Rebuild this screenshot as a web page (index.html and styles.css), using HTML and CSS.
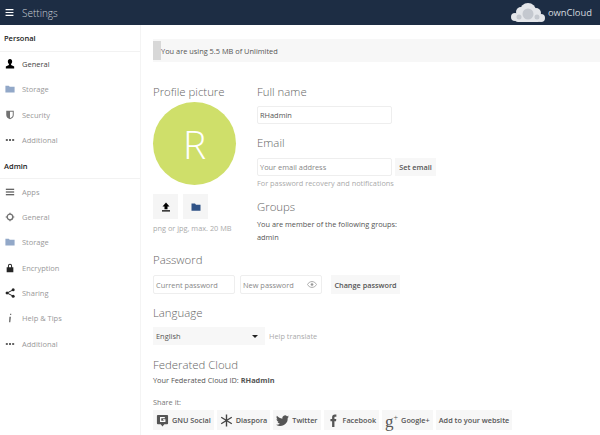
FILE: index.html
```html
<!DOCTYPE html>
<html lang="en">
<head>
<meta charset="utf-8">
<title>Settings</title>
<link rel="stylesheet" href="styles.css">
</head>
<body>
<header class="topbar">
  <div class="brand-left">
    <svg class="menu-icon" viewBox="0 0 9 8"><path d="M0 0h9v1.400H0zM0 3.300h9v1.400H0zM0 6.600h9V8H0z" fill="#fff"/></svg>
    <span class="page-title">Settings</span>
  </div>
  <div class="brand-right">
    <svg class="logo" viewBox="0 0 36 20">
      <g fill="#e4e6ea"><circle cx="5" cy="14" r="4"/><circle cx="11" cy="9" r="5"/><circle cx="18" cy="8" r="8"/><circle cx="26" cy="10" r="5"/><circle cx="31" cy="15" r="4"/><rect x="5" y="12" width="26" height="7" rx="3"/></g>
      <g fill="#c4c8cf"><circle cx="18" cy="11" r="5.500"/><circle cx="9" cy="14" r="2.500"/><circle cx="27" cy="14" r="2.500"/></g>
    </svg>
    <span class="logo-text">ownCloud</span>
  </div>
</header>
<div class="shell">
  <nav class="sidebar">
    <h2 class="nav-head">Personal</h2>
    <a class="nav-item active"><svg class="ico" viewBox="0 0 12 12"><path d="M6 0C4.400 0 3.400 1.200 3.400 3c0 1.300.6 2.500 1.300 3.100v1L1 9v2.500h10V9L7.300 7.100v-1C8 5.500 8.600 4.300 8.600 3 8.600 1.200 7.600 0 6 0z" fill="#000"/></svg><span>General</span></a>
    <a class="nav-item"><svg class="ico faded" viewBox="0 0 12 12"><path d="M.5 2h4l1.200 1.300h5.800v7H.5z" fill="#4a6fa5"/></svg><span>Storage</span></a>
    <a class="nav-item"><svg class="ico faded2" viewBox="0 0 12 12"><path d="M1.500 1h9v5c0 2.500-2 4.200-4.500 5.200C3.500 10.200 1.500 8.500 1.500 6z" fill="#000"/><path d="M6 2.200h3.300V6c0 1.800-1.500 3-3.300 3.800z" fill="#fff"/></svg><span>Security</span></a>
    <a class="nav-item"><svg class="ico" viewBox="0 0 12 12"><path d="M1 5h2.400v2H1zM4.800 5h2.400v2H4.800zM8.600 5H11v2H8.600z" fill="#333"/></svg><span>Additional</span></a>
    <h2 class="nav-head">Admin</h2>
    <a class="nav-item"><svg class="ico" viewBox="0 0 12 12"><path d="M1 2h10v1.200H1zM1 5.400h10v1.200H1zM1 8.800h10V10H1z" fill="#333"/></svg><span>Apps</span></a>
    <a class="nav-item"><svg class="ico faded2" viewBox="0 0 12 12"><circle cx="6" cy="6" r="3.400" fill="none" stroke="#000" stroke-width="1.600"/><path d="M5.300 .8h1.400v1.600H5.300zM5.300 9.600h1.400v1.600H5.300zM.8 5.300h1.600v1.400H.8zM9.600 5.300h1.600v1.400H9.600z" fill="#000"/></svg><span>General</span></a>
    <a class="nav-item"><svg class="ico faded" viewBox="0 0 12 12"><path d="M.5 2h4l1.200 1.300h5.800v7H.5z" fill="#4a6fa5"/></svg><span>Storage</span></a>
    <a class="nav-item"><svg class="ico dark" viewBox="0 0 12 12"><path d="M3.500 5V3.500a2.500 2.500 0 015 0V5H10v6H2V5zM4.700 5h2.600V3.500a1.300 1.300 0 00-2.600 0z" fill="#000" fill-rule="evenodd"/></svg><span>Encryption</span></a>
    <a class="nav-item"><svg class="ico dark" viewBox="0 0 12 12"><circle cx="2.500" cy="6" r="1.800"/><circle cx="9.800" cy="2.200" r="1.800"/><circle cx="9.800" cy="9.800" r="1.800"/><path d="M2.500 6L9.800 2.200M2.500 6l7.300 3.800" stroke="#000" stroke-width="1.200"/></svg><span>Sharing</span></a>
    <a class="nav-item"><svg class="ico faded2" viewBox="0 0 12 12"><path d="M6 1h1.500v1.500H6zM5.200 4.500h2L6.400 11H4.800z" fill="#000"/></svg><span>Help &amp; Tips</span></a>
    <a class="nav-item"><svg class="ico" viewBox="0 0 12 12"><path d="M1 5h2.400v2H1zM4.800 5h2.400v2H4.800zM8.600 5H11v2H8.600z" fill="#333"/></svg><span>Additional</span></a>
  </nav>
  <main class="content">
    <div class="quota"><span class="quota-fill"></span><span class="quota-text">You are using 5.5 MB of Unlimited</span></div>

    <div class="profile-row">
      <section class="avatar-col">
        <h3 class="sec-title">Profile picture</h3>
        <div class="avatar">R</div>
        <div class="avatar-btns">
          <button class="icon-btn"><svg viewBox="0 0 10 10"><path d="M5 .5L8.500 4.500H6.500V7.300H3.500V4.500H1.500zM1 8.300h8v1.200H1z" fill="#000"/></svg></button>
          <button class="icon-btn"><svg viewBox="0 0 10 10"><path d="M.5 1.500h3.500l1 1.200h4.500v6H.5z" fill="#2f5286"/></svg></button>
        </div>
        <p class="hint avatar-hint">png or jpg, max. 20 MB</p>
      </section>
      <section class="fields-col">
        <h3 class="sec-title">Full name</h3>
        <div class="field name-field">RHadmin</div>
        <h3 class="sec-title email-title">Email</h3>
        <div class="inline">
          <div class="field placeholder name-field">Your email address</div>
          <button class="btn set-email">Set email</button>
        </div>
        <p class="hint email-hint">For password recovery and notifications</p>
        <h3 class="sec-title groups-title">Groups</h3>
        <p class="body-text groups-text">You are member of the following groups:<br>admin</p>
      </section>
    </div>

    <h3 class="sec-title password-title">Password</h3>
    <div class="inline">
      <div class="field placeholder pw">Current password</div>
      <div class="field placeholder pw pw-new">New password<svg class="eye" viewBox="0 0 12 8"><path d="M6 .5C3.500.5 1.500 2.300.5 4c1 1.700 3 3.500 5.500 3.500S10.500 5.700 11.500 4C10.500 2.300 8.500.5 6 .5z" fill="none" stroke="#999" stroke-width="1"/><circle cx="6" cy="4" r="1.600" fill="#999"/></svg></div>
      <button class="btn change-pw">Change password</button>
    </div>

    <h3 class="sec-title language-title">Language</h3>
    <div class="inline lang-row">
      <div class="select"><span>English</span><i class="caret"></i></div>
      <a class="hint help-link">Help translate</a>
    </div>

    <h3 class="sec-title fed-title">Federated Cloud</h3>
    <p class="body-text fed-id">Your Federated Cloud ID: <b>RHadmin</b></p>
    <p class="hint-dark share-label">Share it:</p>
    <div class="share-row">
      <button class="btn share"><svg class="s-ico" viewBox="0 0 14 14"><path d="M2 1h10a1 1 0 011 1v8a1 1 0 01-1 1H9l-2 2.500L5 11H2a1 1 0 01-1-1V2a1 1 0 011-1z" fill="#555"/><path d="M9.500 4H5v4h4.500V6.200H7.500" fill="none" stroke="#fff" stroke-width="1.300"/></svg>GNU Social</button>
      <button class="btn share"><svg class="s-ico" viewBox="0 0 14 14"><path d="M7 .5v13M1.300 3.500l11.400 7M12.700 3.500l-11.400 7" stroke="#444" stroke-width="1.500"/></svg>Diaspora</button>
      <button class="btn share"><svg class="s-ico" viewBox="0 0 14 14"><path d="M14 2.700c-.5.200-1 .4-1.600.5.600-.4 1-.9 1.200-1.600-.5.300-1.100.6-1.800.7A2.900 2.900 0 006.900 5C4.500 4.900 2.400 3.700 1 2c-.8 1.300-.4 3 .9 3.900-.5 0-.9-.1-1.300-.4 0 1.400 1 2.600 2.300 2.900-.4.100-.9.100-1.300 0 .4 1.200 1.500 2 2.700 2A5.800 5.800 0 010 11.600 8.200 8.200 0 0012.600 4.300c.6-.4 1-.9 1.400-1.600z" fill="#555"/></svg>Twitter</button>
      <button class="btn share"><svg class="s-ico" viewBox="0 0 14 14"><path d="M5.500 14V7.800H3.700V5.300h1.800V3.500C5.500 1.500 6.700.5 8.400.5h1.700v2.400H9c-.9 0-1 .4-1 1.100v1.300h2l-.3 2.500H8V14z" fill="#555"/></svg>Facebook</button>
      <button class="btn share"><span class="gplus">g<sup>+</sup></span>Google+</button>
      <button class="btn share">Add to your website</button>
    </div>
  </main>
</div>
</body>
</html>
```
FILE: styles.css
```css
* { box-sizing: border-box; }
html, body { margin: 0; padding: 0; height: 100%; overflow: hidden; }
body {
  width: 600px;
  height: 435px;
  background: #fff;
  font-family: "Open Sans", "Noto Sans", sans-serif;
  font-size: 7.400px;
  color: #555;
  display: flex;
  flex-direction: column;
}
.topbar {
  height: 25px;
  flex: none;
  background: #1d2d44;
  display: flex;
  align-items: center;
  justify-content: space-between;
  padding: 0 8px 0 5px;
}
.brand-left { display: flex; align-items: center; gap: 8px; }
.menu-icon { width: 9px; height: 7px; }
.page-title { color: #c9ced6; font-size: 10px; font-weight: 300; }
.brand-right { display: flex; align-items: center; gap: 2px; }
.logo { width: 36px; height: 20px; }
.logo-text { color: #d5d9df; font-size: 9.400px; }

.shell { flex: 1; display: flex; min-height: 0; }
.sidebar {
  width: 141px;
  flex: none;
  border-right: 1px solid #f4f4f4;
  display: flex;
  flex-direction: column;
}
.nav-head {
  margin: 0;
  height: 26.500px;
  padding: 7px 0 0 4px;
  font-size: 7.500px;
  font-weight: 600;
  color: #222;
  border-bottom: 1px solid #f2f2f2;
  line-height: 12px;
}
.nav-item {
  height: 25.300px;
  flex: none;
  display: flex;
  align-items: center;
  gap: 7px;
  padding-left: 5px;
  color: #999;
  font-size: 7.500px;
}
.nav-item.active { color: #444; }
.ico { width: 10px; height: 10px; flex: none; }
.faded { opacity: .6; }
.faded2 { opacity: .55; }
.dark { opacity: .85; }

.content { flex: 1; padding: 14px 0 0 12px; min-width: 0; }
.quota {
  height: 23px;
  background: #f7f7f7;
  display: flex;
  align-items: center;
  position: relative;
  padding-left: 8px;
}
.quota-fill { position: absolute; left: 0; top: 2px; height: 19px; width: 8px; background: #d8d8d8; }
.quota-text { position: relative; color: #555; }

.profile-row { display: flex; margin-top: 22px; }
.avatar-col { width: 104px; flex: none; }
.sec-title { margin: 0; font-size: 11.400px; font-weight: 300; color: #666; line-height: 16px; }
.avatar {
  width: 83px; height: 83px;
  margin-top: 2px;
  border-radius: 50%;
  background: #cfdf6a;
  color: #fff;
  font-size: 39px;
  font-weight: 300;
  display: flex; align-items: center; justify-content: center;
}
.avatar-btns { display: flex; gap: 5px; margin-top: 9px; }
.icon-btn {
  width: 25px; height: 25px;
  background: #f5f5f5; border: 0; padding: 0;
  display: flex; align-items: center; justify-content: center;
}
.icon-btn svg { width: 10px; height: 10px; }
.hint { margin: 0; color: #aaa; font-size: 7.350px; }
.avatar-hint { margin-top: 4px; line-height: 11px; }
.fields-col { flex: 1; }
.name-field { width: 135px; }
.field {
  height: 18px;
  border: 1px solid #eee;
  border-radius: 2px;
  background: #fff;
  color: #555;
  padding-left: 2px;
  display: flex;
  align-items: center;
  font-size: 7.400px;
}
.fields-col > .name-field { margin-top: 6px; }
.placeholder { color: #888; }
.email-title { margin-top: 11px; }
.inline { display: flex; align-items: center; }
.fields-col .inline { margin-top: 7px; }
.btn {
  background: #f7f7f7; border: 0;
  font-family: inherit; font-size: 7.300px; font-weight: 600; color: #555;
  padding: 0;
  white-space: nowrap;
  display: flex; align-items: center; justify-content: center;
}
.set-email { width: 41px; height: 18px; margin-left: 3px; }
.email-hint { margin-top: 2px; line-height: 11px; }
.groups-title { margin-top: 10px; }
.body-text { margin: 0; color: #555; font-size: 7.350px; line-height: 13px; }
.groups-text { margin-top: 3px; }

.password-title { margin-top: 8px; }
.pw { width: 82px; height: 19px; margin-top: 7px; color: #888; }
.pw-new { margin-left: 5px; justify-content: space-between; padding-right: 4px; }
.eye { width: 10px; height: 7px; }
.change-pw { width: 69px; height: 19px; margin: 7px 0 0 9px; }
.language-title { margin-top: 11px; }
.lang-row { margin-top: 6px; }
.select {
  width: 112px; height: 18px;
  background: #f7f7f7;
  display: flex; align-items: center; justify-content: space-between;
  padding: 0 7px 0 3px;
  color: #555;
}
.caret { width: 0; height: 0; border: 3px solid transparent; border-top: 3px solid #222; border-bottom: 0; }
.help-link { margin-left: 4px; }
.fed-title { margin-top: 12px; }
.fed-id { margin-top: 1px; }
.hint-dark { margin: 0; color: #777; font-size: 7.350px; }
.share-label { margin-top: 10px; line-height: 11px; }
.share-row { display: flex; gap: 3px; margin-top: 2px; }
.share { height: 20px; padding: 0 3px; gap: 3px; }
.s-ico { width: 13px; height: 13px; }
.gplus { font-family: "Liberation Serif", serif; font-size: 17px; font-weight: 400; line-height: 14px; color: #555; }
.gplus sup { font-size: 8px; }
```
